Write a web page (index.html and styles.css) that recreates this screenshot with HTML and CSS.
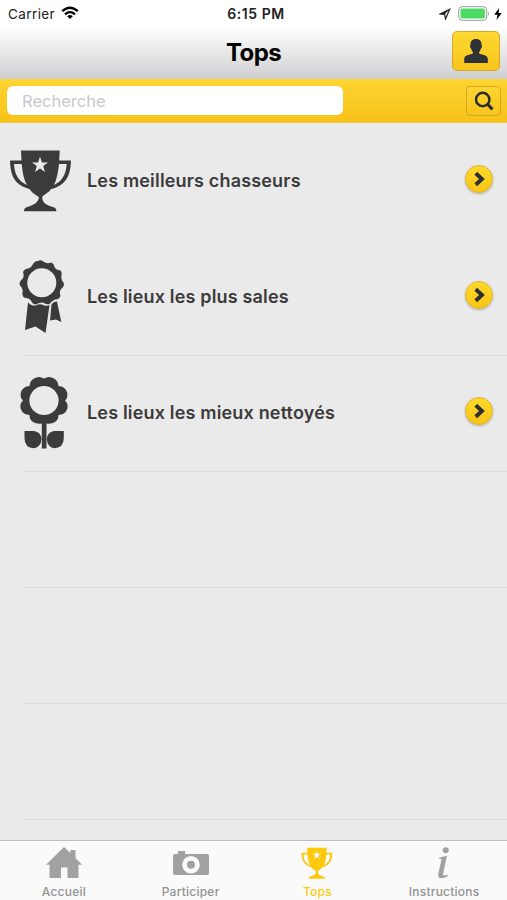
FILE: index.html
```html
<!DOCTYPE html>
<html lang="fr">
<head>
<meta charset="utf-8">
<title>Tops</title>
<link rel="stylesheet" href="styles.css">
</head>
<body>
<svg class="defs" aria-hidden="true">
  <symbol id="trophy" viewBox="9 13 63 63">
    <path fill-rule="evenodd" d="M21 14.500H59.700L59.200 24.500H71C70.500 42 64 50 51 53C48.500 57 43 59 42.300 61C42 65 44 68 51 70.500C55 71.500 56 72 56.500 75.300H24C24 72 26 71.300 29 70.500C36 68 39 65 38.800 61C36 59 32 57 29.500 53C16 49 10.500 42 10 24.500H21.500ZM14 28C14.500 38 18 45 27 49C24 44 22.500 37 21.700 28ZM66.700 28H59C58 37 56.500 44 54 49C62.500 45 66 38 66.700 28ZM40 20.700L38 26.500H32L36.800 30.100L35 36L40 32.500L45 36L43.200 30.100L48 26.500H42Z"/>
  </symbol>
  <symbol id="arrow" viewBox="0 0 28 28"><path d="M10.500 7.800L17.200 14L10.500 20.200" fill="none" stroke="#2d3033" stroke-width="4.200"/></symbol>
</svg>
<header>
  <div class="status">
    <div class="carrier"><span>Carrier</span>
      <svg width="18" height="14" viewBox="0 0 18 14"><g fill="none" stroke="#000" stroke-width="2.300"><path d="M1.200 5.200Q9-1.800 16.800 5.200M4 8.300Q9 4 14 8.300"/></g><path d="M6.200 10.200Q9 8 11.800 10.200L9 13Z"/></svg>
    </div>
    <div class="clock">6:15 PM</div>
    <div class="power">
      <svg width="12" height="12" viewBox="0 0 12 12"><path d="M1 6L10.700 1.300L6.500 11L5.700 6.300Z" fill="none" stroke="#222" stroke-width="1.200"/><path d="M1 6L10.700 1.300L5.700 6.300Z" fill="#222"/></svg>
      <svg width="32" height="15" viewBox="0 0 32 15"><rect x=".7" y=".7" width="28" height="13.600" rx="3.500" fill="#fff" stroke="#999"/><rect x="2.500" y="2.500" width="24.400" height="10" rx="1.700" fill="#4cd964"/><path d="M30 5Q31.800 7.500 30 10Z" fill="#999"/></svg>
      <svg width="8" height="12" viewBox="0 0 8 12"><path d="M5 0L.3 6.700H3.500L2.500 12L7.800 4.900H4.600Z"/></svg>
    </div>
  </div>
  <div class="titlebar">
    <h1>Tops</h1>
    <button class="profile" aria-label="Profil"><svg width="26" height="26" viewBox="0 0 26 26"><path d="M13 1C17 1 18.800 3.500 18.500 7C19.500 7.500 19 9.500 18 10.500C17.600 12.500 16 13.500 16 15C17 17 24.800 16 24.800 21V25H1.200V21C1.200 16 9 17 10 15C10 13.500 8.400 12.500 8 10.500C7 9.500 6.500 7.500 7.500 7C7.200 3.500 9 1 13 1Z" fill="#2f3338"/></svg></button>
  </div>
</header>
<form class="search">
  <input type="text" placeholder="Recherche">
  <button type="button" aria-label="Rechercher"><svg width="20" height="20" viewBox="0 0 20 20" fill="none" stroke="#2b2d2e"><circle cx="8.700" cy="8.500" r="6.700" stroke-width="2.500"/><path d="M13.300 13L18.500 18.300" stroke-width="3.200"/></svg></button>
</form>
<main>
  <a class="row first"><svg class="trophy"><use href="#trophy"/></svg><span>Les meilleurs chasseurs</span><i class="go"><svg><use href="#arrow"/></svg></i></a>
  <a class="row"><svg class="picture" viewBox="0 0 80 90">
      <path fill-rule="evenodd" d="M38 9Q41 7 44 10Q47 12 51.500 10.500Q54 11.500 54.500 15Q56 18 60.500 18.500Q62.500 21 61.200 25Q61 28 64 31.500Q64 35 61 37Q59 40 60.500 44Q59 47.500 55 47.500Q52 48.500 49.500 52Q46 53 43 50.500Q39 50.500 35.500 52.500Q32 52 31 48.500Q29 46 24 45.500Q21.500 43 22.800 39Q22.500 36 19.500 32.500Q19.500 29 22.500 27Q24.500 24 23 20Q24.500 16.500 28.500 16.500Q31.500 15.500 33 12Q35 8.500 38 9ZM41.800 16.200A14.500 14.500 0 1 0 41.800 45.200A14.500 14.500 0 1 0 41.800 16.200Z"/>
      <path d="M28 50.200Q31 54 35.500 53.500Q39 51.500 42 52.500Q45 54.500 49.500 53.300L45.500 81L35.500 74.500L25 78Z"/><path d="M51.500 52.500Q53.500 49.500 57 49.500L61.300 70L56 67.500L50 68.500Z"/>
    </svg><span>Les lieux les plus sales</span><i class="go"><svg><use href="#arrow"/></svg></i></a>
  <a class="row"><svg class="picture" viewBox="0 0 80 90">
      <path fill-rule="evenodd" d="M44 10.500Q49 7.500 54 10.500Q58 12.500 58.500 18Q65 18.500 67 24Q68.500 29 65 32.500Q69 36.500 67 41.500Q65 46.500 58.500 47Q58.500 53 53 55Q48 56.500 44 55Q40 56.500 35 55Q29.500 53 29.500 47Q23 46.500 21 41.500Q19 36.500 23 32.500Q19.500 29 21 24Q23 18.500 29.500 18Q30 12.500 34 10.500Q39 7.500 44 10.500ZM44 17.900A14.600 14.600 0 1 0 44 47.100A14.600 14.600 0 1 0 44 17.900Z"/>
      <path d="M41.800 54H46.500V80.500H41.800ZM24.500 63H34Q41 64 41.500 71Q41 79 34 80.300Q24.500 80 24.500 70ZM63.800 63H54Q47.300 64 46.800 71Q47.300 79 54 80.300Q63.800 80 63.800 70Z"/>
    </svg><span>Les lieux les mieux nettoyés</span><i class="go"><svg><use href="#arrow"/></svg></i></a>
  <div class="row"></div>
  <div class="row"></div>
  <div class="row"></div>
</main>
<nav>
  <a><svg viewBox="0 0 38 34"><path d="M19 1L25.300 7V4H30.500V12L37 18.800H33.500V32H22.500V21.500H16V32H4.500V18.800H1Z"/></svg><span>Accueil</span></a>
  <a><svg viewBox="0 0 38 34"><path fill-rule="evenodd" d="M3 8H6V5H13V8H35Q37 8 37 10V27Q37 29 35 29H3Q1 29 1 27V10Q1 8 3 8ZM19 10A8.800 8.800 0 1 0 19 27.600A8.800 8.800 0 1 0 19 10Z"/><circle cx="19" cy="18.800" r="4"/></svg><span>Participer</span></a>
  <a class="active"><svg class="small-trophy"><use href="#trophy"/></svg><span>Tops</span></a>
  <a><svg viewBox="0 0 38 34"><circle cx="20.700" cy="4.300" r="3"/><path d="M14.500 11.500L22 9.800L18 28Q17.500 30.500 22.700 28.500L22.500 30.500Q16 33.500 13.800 31.500Q12.800 30.500 13.400 27.500L16.500 13.500Q16.500 12.500 14.200 13Z"/></svg><span>Instructions</span></a>
</nav>
</body>
</html>
```
FILE: styles.css
```css
* { box-sizing: border-box; }
body { margin: 0; height: 900px; overflow: hidden; display: flex; flex-direction: column; font-family: Inter, "Liberation Sans", sans-serif; background: #eaeaea; }
svg { display: block; flex: none; }
.defs { position: absolute; width: 0; height: 0; }
button { padding: 0; display: flex; align-items: center; justify-content: center; }
header { height: 79px; background: linear-gradient(#fff 0, #fff 27px, #d0d0d2 78px); }
.status { height: 27px; display: grid; grid-template-columns: 1fr auto 1fr; align-items: center; font-size: 13.500px; color: #222; }
.carrier { display: flex; align-items: center; gap: 6px; padding-left: 8px; letter-spacing: .4px; }
.carrier svg { margin-top: -2px; }
.clock { font-weight: 600; font-size: 14px; letter-spacing: .55px; padding-left: 5px; }
.power { display: flex; justify-content: flex-end; align-items: center; gap: 4px; padding-right: 5px; }
.power svg:nth-child(1) { margin-right: 3px; }
.titlebar { height: 52px; display: grid; grid-template-columns: 1fr auto 1fr; align-items: center; }
h1 { grid-column: 2; margin: 0; font-size: 24px; line-height: 30px; font-weight: 700; letter-spacing: -.6px; }
.profile { justify-self: end; width: 48px; height: 40px; margin: -4px 7px 0 0; border: 1px solid #d4a72d; border-radius: 5px; background: linear-gradient(#fed830, #f8c51c); }
.search { height: 44px; margin: 0; padding: 0 6px 0 7px; display: flex; align-items: center; justify-content: space-between; background: linear-gradient(#fdd430, #f7c21a); border-bottom: 1px solid #efc848; }
.search input { width: 336px; height: 29px; border: 0; border-radius: 6px; padding: 0 15px; background: #fff; font: 16.500px Inter, sans-serif; }
.search input::placeholder { color: #c8c8cd; opacity: 1; }
.search button { width: 35px; height: 30px; border: 1px solid #d3a625; border-radius: 4px; background: linear-gradient(#fed530, #f8c51c); }
main { flex: 1; min-height: 0; padding-top: 1px; overflow: hidden; }
.row { height: 116px; margin-left: 25px; border-bottom: 1px solid #dbdbdb; display: flex; align-items: center; color: #3b3b3b; fill: #3b3b3b; }
.first { border-color: transparent; }
.trophy { width: 63px; height: 63px; margin: -3px 15px 0 -16px; }
.picture { width: 80px; height: 90px; margin: -1px 7px 0 -25px; }
.row span { flex: 1; margin-top: -2px; font-size: 18px; font-weight: 600; letter-spacing: .17px; white-space: nowrap; }
.go { width: 28px; height: 28px; margin: -5px 14px 0 0; border-radius: 50%; border: 1px solid #e1b32a; background: linear-gradient(#ffd92c, #f9c515); box-shadow: 0 1px 2px #aaa; }
.go svg { width: 26px; height: 26px; }
nav { height: 60px; border-top: 1px solid #bdbdbd; background: #fafafa; display: grid; grid-template-columns: repeat(4, 1fr); color: #929292; fill: #a1a1a1; font-size: 12px; }
nav a { display: flex; flex-direction: column; align-items: center; padding: 5px 0 0 1px; }
nav svg { width: 38px; height: 34px; }
nav span { line-height: 16px; margin-top: 4px; font-weight: 500; letter-spacing: .23px; }
nav .small-trophy { height: 32px; width: 32px; margin: 1px 0; }
.active { color: #fdc90c; fill: #fdc90c; }
```
